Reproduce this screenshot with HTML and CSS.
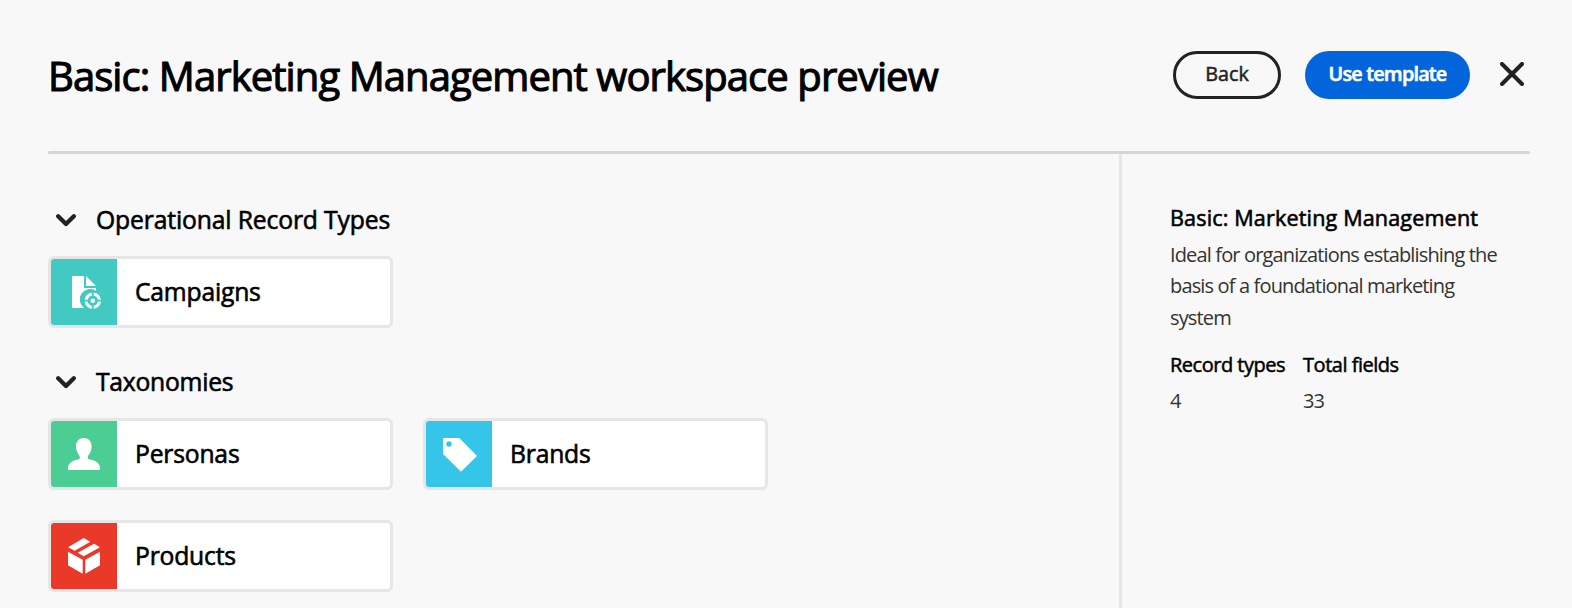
FILE: index.html
```html
<!DOCTYPE html>
<html lang="en">
<head>
<meta charset="utf-8">
<title>Basic: Marketing Management workspace preview</title>
<link rel="stylesheet" href="styles.css">
</head>
<body>
<div class="preview">
  <header class="header">
    <h1 class="title">Basic: Marketing Management workspace preview</h1>
    <div class="actions">
      <button class="btn btn-outline">Back</button>
      <button class="btn btn-primary">Use template</button>
      <button class="close" aria-label="Close">
        <svg width="24" height="24" viewBox="0 0 24 24"><path d="M2 2 22 22M22 2 2 22"/></svg>
      </button>
    </div>
  </header>
  <div class="content">
    <main class="main">
      <section class="section">
        <h2 class="section-title">
          <svg class="chevron" width="20" height="14" viewBox="0 0 20 14"><path d="M2.200 3.200 10 11 17.800 3.200"/></svg>
          <span class="heading-long">Operational Record Types</span>
        </h2>
        <div class="cards">
          <div class="card">
            <svg class="tile teal" viewBox="0 0 66 66">
              <path d="M21 17h12v12h12v2.8A10.4 10.4 0 0 0 33.2 49H21z"/>
              <path d="M35 17l10 10H35z"/>
              <circle cx="41.8" cy="41.7" r="6.7" class="ring"/>
              <path d="M41.8 32.5v5M41.8 46v5M32.5 41.7h5M46 41.7h5" class="cut"/>
              <circle cx="41.8" cy="41.7" r="2.3"/>
            </svg>
            <span class="label">Campaigns</span>
          </div>
        </div>
      </section>
      <section class="section">
        <h2 class="section-title">
          <svg class="chevron" width="20" height="14" viewBox="0 0 20 14"><path d="M2.200 3.200 10 11 17.800 3.200"/></svg>
          <span class="heading-short">Taxonomies</span>
        </h2>
        <div class="cards">
          <div class="card">
            <svg class="tile green" viewBox="0 0 66 66">
              <path d="M32.8 17c4.6 0 7.8 3.3 7.8 8.3 0 4-1.6 7.4-3.6 9.7v1.7c0 1 .5 1.5 1.5 1.7C44.5 39 49 42 49 47.300V49H17v-1.700c0-5.300 4.500-8.300 10.200-8.900 1-.2 1.500-.7 1.500-1.700V35c-2-2.300-3.700-5.700-3.700-9.700 0-5 3.200-8.300 7.800-8.300z"/>
            </svg>
            <span class="label">Personas</span>
          </div>
          <div class="card">
            <svg class="tile blue" viewBox="0 0 66 66">
              <path fill-rule="evenodd" d="M17 17h16.300L51 35 35 50.700 17 33zM23 20.300a2.700 2.700 0 1 0 0 5.400 2.700 2.700 0 0 0 0-5.400z"/>
            </svg>
            <span class="label">Brands</span>
          </div>
          <div class="card">
            <svg class="tile red" viewBox="0 0 66 66">
              <path d="M32.700 15l6.600 3.700-15.600 9L17 24.300zM43 20.700l6 3.500-16.300 9-6-3.500zM17 28.700l14.700 8v14L17 42.300zM49 28.700l-14.700 8v14L49 42.300z"/>
            </svg>
            <span class="label">Products</span>
          </div>
        </div>
      </section>
    </main>
    <aside class="side">
      <h3 class="side-title">Basic: Marketing Management</h3>
      <p class="desc">Ideal for organizations establishing the basis of a foundational marketing system</p>
      <dl class="stats">
        <div class="stat"><dt>Record types</dt><dd>4</dd></div>
        <div class="stat"><dt>Total fields</dt><dd>33</dd></div>
      </dl>
    </aside>
  </div>
</div>
</body>
</html>
```
FILE: styles.css
```css
* { box-sizing: border-box; margin: 0; padding: 0; }

body {
  background: #f8f8f8;
  color: #000;
  font-family: "Open Sans", sans-serif;
  overflow: hidden;
}

.preview {
  display: flex;
  flex-direction: column;
  height: 608px;
  padding: 0 42px 0 48px;
}

.header {
  display: flex;
  justify-content: space-between;
  align-items: center;
  height: 150px;
  flex-shrink: 0;
}

.title {
  padding-top: 2px;
  font-size: 40px;
  font-weight: 400;
  line-height: 48px;
  letter-spacing: -0.92px;
  white-space: nowrap;
  -webkit-text-stroke: 1.1px #000;
}

.actions { display: flex; align-items: center; padding-right: 6px; }

.btn {
  height: 48px;
  border-radius: 24px;
  font: 400 19.8px/40px "Open Sans", sans-serif;
  padding-bottom: 2px;
}

.btn-outline {
  width: 108px;
  margin-right: 24px;
  border: 3px solid #222;
  background: transparent;
  color: #222;
  -webkit-text-stroke: 0.5px #222;
}

.btn-primary {
  width: 165px;
  margin-right: 30px;
  border: 0;
  background: #0265dc;
  color: #fff;
  font-weight: 600;
  letter-spacing: -0.8px;
  -webkit-text-stroke: 0.6px #fff;
}

.close { display: flex; border: 0; background: none; padding-bottom: 2px; }

.close svg, .chevron { fill: none; stroke: #222; stroke-width: 4; stroke-linecap: round; }
.chevron { stroke-width: 4.3; stroke-linejoin: round; }

.content {
  display: flex;
  flex: 1;
  position: relative;
}

.content::before {
  content: "";
  position: absolute;
  top: 1px;
  left: 0;
  right: 0;
  height: 3px;
  border-radius: 2px;
  background: #d5d5d5;
}

.main { width: 1071px; padding-top: 54px; }

.section { margin-bottom: 38px; }
.section:last-child { margin-bottom: 0; }

.section-title {
  display: flex;
  align-items: center;
  gap: 20px;
  height: 32px;
  margin-bottom: 20px;
  padding-left: 8px;
  font-size: 24.7px;
  font-weight: 400;
  line-height: 32px;
  -webkit-text-stroke: 0.6px #000;
}

.heading-long { letter-spacing: -0.14px; }
.heading-short { letter-spacing: -0.25px; }

.cards { display: flex; flex-wrap: wrap; gap: 30px; }

.card {
  display: flex;
  width: 345px;
  height: 72px;
  border: 3px solid #e6e6e6;
  border-radius: 6px;
  background: #fff;
  overflow: hidden;
}

.tile { width: 66px; height: 66px; fill: #fff; }
.teal { background: #41c9c2; }
.green { background: #4bcd93; }
.blue { background: #34c5e8; }
.red { background: #ea3829; }

.ring { fill: none; stroke: #fff; stroke-width: 3.1; }
.cut { stroke: #41c9c2; stroke-width: 1.8; }

.label {
  padding-left: 18px;
  font-size: 24.7px;
  line-height: 65px;
  letter-spacing: -0.2px;
  -webkit-text-stroke: 0.6px #000;
}

.side {
  flex: 1;
  margin-top: 4px;
  padding: 48px 20px 0 48px;
  border-left: 3px solid #e6e6e6;
}

.side-title {
  font-size: 21.6px;
  font-weight: 400;
  line-height: 32px;
  letter-spacing: 0.14px;
  -webkit-text-stroke: 0.6px #000;
}

.desc {
  margin-top: 4.500px;
  color: #333;
  font-size: 20px;
  line-height: 31.500px;
  letter-spacing: -0.85px;
}

.stats { display: flex; gap: 18px; margin-top: 16px; }

.stat dt {
  font-size: 20px;
  line-height: 31px;
  letter-spacing: -0.49px;
  -webkit-text-stroke: 0.5px #000;
}

.stat dd {
  margin-top: 5px;
  color: #333;
  font-size: 20px;
  line-height: 31px;
  letter-spacing: -1px;
}
```
